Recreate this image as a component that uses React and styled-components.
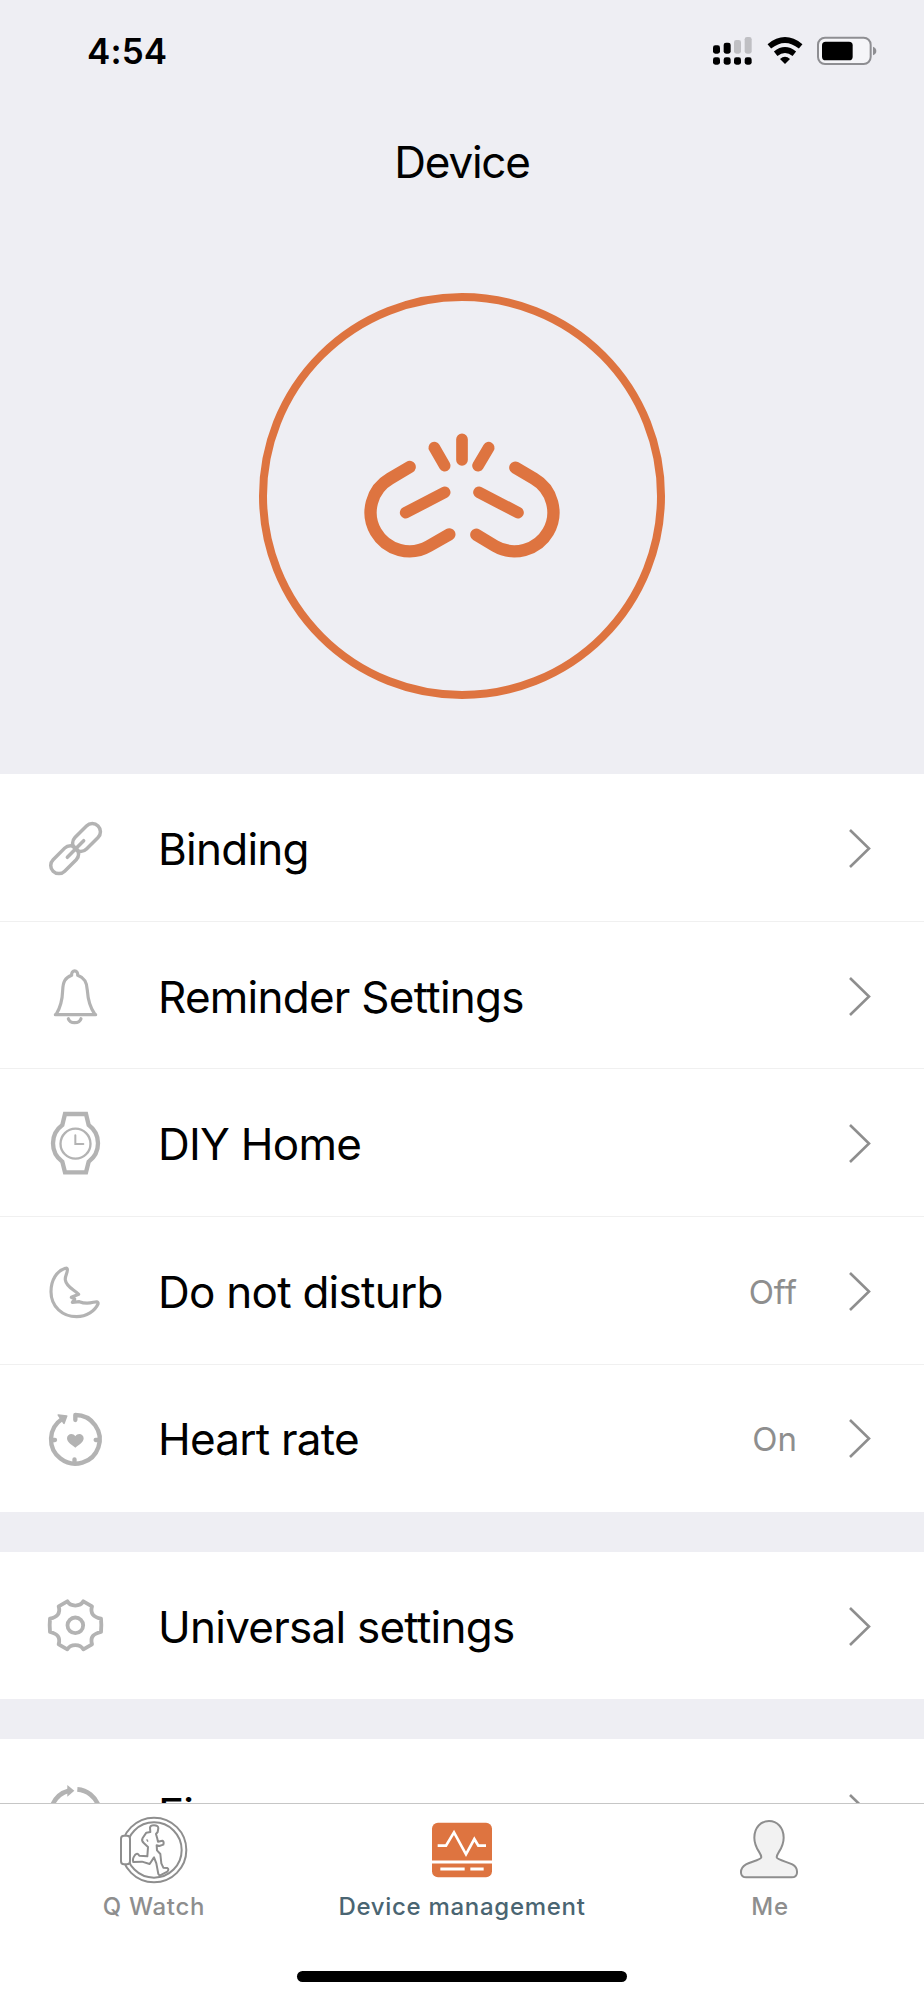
import React from 'react';
import styled, { createGlobalStyle } from 'styled-components';

const GlobalStyles = createGlobalStyle`
  :root {
    --bg: #eeeef3;
    --white: #ffffff;
    --black: #000000;
    --orange: #de7440;
    --icon: #b3b3b3;
    --muted: #8e8e8e;
    --active: #4a6572;
  }
  * {
    margin: 0;
    padding: 0;
    box-sizing: border-box;
  }
  body {
    background: var(--bg);
    font-family: Inter, 'Liberation Sans', sans-serif;
  }
`;

const Screen = styled.div`
  width: 924px;
  height: 2000px;
  display: flex;
  flex-direction: column;
  overflow: hidden;
  background: var(--bg);
`;

const StatusBar = styled.header`
  height: 100px;
  flex: none;
  display: flex;
  align-items: center;
  justify-content: space-between;
  padding: 1px 41px 0 87px;
`;

const Time = styled.span`
  font-size: 35px;
  font-weight: 600;
  letter-spacing: 0.1px;
`;

const Title = styled.h1`
  height: 124px;
  flex: none;
  line-height: 124px;
  text-align: center;
  font-size: 44px;
  font-weight: 400;
  letter-spacing: -1.2px;
`;

const Hero = styled.section`
  height: 550.3px;
  flex: none;
  display: flex;
  justify-content: center;
  align-items: flex-start;
  padding-top: 69px;
`;

const Ring = styled.div`
  width: 406px;
  height: 406px;
  display: flex;
  align-items: center;
  justify-content: center;
  border: 8px solid var(--orange);
  border-radius: 50%;
`;

const Content = styled.main`
  flex: 1;
  min-height: 0;
  display: flex;
  flex-direction: column;
  gap: 39.6px;
  overflow: hidden;
`;

const Group = styled.ul`
  flex: none;
  list-style: none;
  background: var(--white);
`;

const Row = styled.li`
  height: 147.6px;
  display: flex;
  align-items: center;
  padding: 0 53px 0 43px;

  &:not(:last-child) {
    box-shadow: inset 0 -1px 0 #f0f0f0;
  }
`;

const RowIcon = styled.svg`
  width: 64px;
  height: 64px;
  flex: none;
  fill: none;
  stroke: var(--icon);
  stroke-linecap: round;
  stroke-linejoin: round;
`;

const Label = styled.span`
  flex: 1;
  margin-left: 51px;
  font-size: 44px;
  line-height: 60px;
  letter-spacing: -0.75px;
  padding-top: 2px;
`;

const Value = styled.span`
  margin-right: 52px;
  padding-top: 2px;
  font-size: 33px;
  color: var(--muted);
`;

const Arrow = styled.svg`
  width: 22px;
  height: 40px;
  flex: none;
  fill: none;
  stroke: var(--muted);
  stroke-width: 2.6;
`;

const TabBar = styled.nav`
  height: 197px;
  flex: none;
  position: relative;
  display: grid;
  grid-template-columns: repeat(3, 1fr);
  background: var(--white);
  border-top: 1px solid #c6c6c6;
`;

const Tab = styled.div`
  display: flex;
  flex-direction: column;
  align-items: center;
  padding-top: 10px;
  color: ${({ $active }) => ($active ? 'var(--active)' : 'var(--muted)')};
`;

const TabIcon = styled.svg`
  width: 72px;
  height: 72px;
  fill: none;
  stroke: var(--muted);
  stroke-width: 6;
  stroke-linejoin: round;
`;

const TabLabel = styled.span`
  margin-top: 6px;
  font-size: 24px;
  line-height: 30px;
  font-weight: 500;
  letter-spacing: 0.7px;
`;

const HomeIndicator = styled.div`
  position: absolute;
  left: 297px;
  bottom: 18px;
  width: 330px;
  height: 11px;
  border-radius: 6px;
  background: var(--black);
`;

const icons = {
  binding: (
    <RowIcon viewBox="39 48 192 192" strokeWidth="10.5">
      <rect x="120.5" y="88" width="98" height="49" rx="24.5" transform="rotate(-45 169.5 112.5)" />
      <rect x="55" y="154.5" width="98" height="49" rx="24.5" transform="rotate(-45 104 179)" />
      <path d="M161 122 L112 172" />
    </RowIcon>
  ),
  reminder: (
    <RowIcon viewBox="39 491 192 192" strokeWidth="9.5">
      <path d="M76 643 H197 M79 641 C92 620 97 600 98 570 C99 545 105 532 125 525 C123 507 145 507 143 525 C163 532 171 545 172 570 C174 600 181 622 194 641" />
      <path d="M115 655 C120 671 148 671 153 655" />
    </RowIcon>
  ),
  watch: (
    <RowIcon viewBox="39 64 192 192" strokeWidth="13">
      <path
        strokeLinejoin="miter"
        d="M105 73 H168 L176 106 A68 68 0 0 1 176 216 L168 248 H105 L97 216 A68 68 0 0 1 97 106 Z"
      />
      <circle cx="136.5" cy="162" r="45" strokeWidth="7" />
      <path strokeWidth="6" strokeLinejoin="miter" d="M136 137 V163 H160" />
    </RowIcon>
  ),
  moon: (
    <RowIcon viewBox="39 507 192 192" strokeWidth="9.5">
      <path d="M106 535 C80 543 63 570 63 605 C63 650 98 680 140 680 C170 680 195 662 204 642 C206 634 198 635 190 637 C175 641 160 640 148 635 L127 637 L134 627 L124 622 L146 613 C135 600 109 592 106 570 C104 560 112 550 112 541 C113 535 110 533 106 535 Z" />
    </RowIcon>
  ),
  heart: (
    <RowIcon viewBox="39 50 192 192" strokeWidth="13">
      <path d="M136 92 V77 A73 73 0 1 1 96 89" />
      <path d="M68 152 H75 M197 152 H204 M133.500 210 V216" />
      <path strokeWidth="5" fill="#b3b3b3" d="M85 77 L110 80 L102 102 Z" />
      <path
        stroke="none"
        fill="#b3b3b3"
        d="M136 175 C128 168 111 160 111 147 C111 133 129 129 136 141 C143 129 161 133 161 147 C161 160 144 168 136 175 Z"
      />
    </RowIcon>
  ),
  gear: (
    <RowIcon viewBox="39 613 192 192" strokeWidth="11.5">
      <path d="M112 635 C122 652 150 652 160 635 L186 650 C180 672 190 682 213 687 Q215 707 213 727 C190 732 180 742 186 764 L160 779 C150 762 122 762 112 779 L86 764 C92 742 82 732 60 727 Q58 707 60 687 C82 682 92 672 86 650 Z" />
      <circle cx="136" cy="707" r="23.5" />
    </RowIcon>
  ),
  find: (
    <RowIcon viewBox="39 152 192 192" strokeWidth="14">
      <path strokeLinecap="butt" d="M66 228 A73 73 0 0 1 116 181 M142 177 A73 73 0 0 1 206 228" />
      <path stroke="none" fill="#b3b3b3" d="M112 164 L133 181 L112 199 Z" />
    </RowIcon>
  ),
};

const groups = [
  [
    { icon: 'binding', label: 'Binding' },
    { icon: 'reminder', label: 'Reminder Settings' },
    { icon: 'watch', label: 'DIY Home' },
    { icon: 'moon', label: 'Do not disturb', value: 'Off' },
    { icon: 'heart', label: 'Heart rate', value: 'On' },
  ],
  [{ icon: 'gear', label: 'Universal settings' }],
  [{ icon: 'find', label: 'Fi' }],
];

function StatusIcons() {
  return (
    <svg width="171" height="30" viewBox="66 46 513 90">
      <rect x="69" y="74" width="21" height="25" rx="7" />
      <rect x="101" y="66" width="21" height="33" rx="7" />
      <g fill="#bfbfc3">
        <rect x="132" y="58" width="21" height="41" rx="7" />
        <rect x="164" y="49" width="21" height="50" rx="7" />
      </g>
      <rect x="69" y="110" width="21" height="22" rx="7" />
      <rect x="101" y="110" width="21" height="22" rx="7" />
      <rect x="132" y="110" width="21" height="22" rx="7" />
      <rect x="164" y="110" width="21" height="22" rx="7" />
      <path
        fill="none"
        stroke="#000"
        strokeWidth="17"
        d="M238 77 Q285 39 332 77 M257 99 Q285 77 313 99"
      />
      <path d="M285 130 L270 115 Q285 102 300 115 Z" />
      <rect x="384" y="51" width="158" height="79" rx="21" fill="#f5f5f8" stroke="#8e8e92" strokeWidth="6" />
      <rect x="396" y="63" width="92" height="56" rx="11" />
      <path fill="#8e8e92" d="M549 78 Q559 82 559 91 Q559 100 549 104 Z" />
    </svg>
  );
}

function BrokenLink() {
  return (
    <svg
      width="240"
      height="170"
      viewBox="6 3 720 510"
      fill="none"
      stroke="#de7440"
      strokeWidth="37"
      strokeLinecap="round"
    >
      <path d="M209 171 L150 206 A116.500 116.500 0 0 0 267 408 L328 373" />
      <path d="M526 173 L582 206 A116.500 116.500 0 0 1 465 408 L409 374" />
      <path strokeWidth="35" d="M197 308 L314 247 M417 247 L534 308" />
      <path strokeWidth="35" d="M366 88 V150 M283 113 L314 167 M446 113 L414 167" />
    </svg>
  );
}

function App() {
  return (
    <>
      <GlobalStyles />
      <Screen>
        <StatusBar>
          <Time>4:54</Time>
          <StatusIcons />
        </StatusBar>
        <Title>Device</Title>
        <Hero>
          <Ring>
            <BrokenLink />
          </Ring>
        </Hero>
        <Content>
          {groups.map((rows) => (
            <Group key={rows[0].icon}>
              {rows.map(({ icon, label, value }) => (
                <Row key={icon}>
                  {icons[icon]}
                  <Label>{label}</Label>
                  {value && <Value>{value}</Value>}
                  <Arrow viewBox="0 0 22 40">
                    <path d="M1 2 L20 20.500 L1 39" />
                  </Arrow>
                </Row>
              ))}
            </Group>
          ))}
        </Content>
        <TabBar>
          <Tab>
            <TabIcon viewBox="264 252 216 216">
              <circle cx="372" cy="360" r="97" />
              <circle cx="372" cy="360" r="83" />
              <rect x="273" y="317" width="27" height="86" rx="9" fill="#fff" />
              <path d="M361 306 L360 293 Q361 286 372 286 Q384 286 385 294 L383 306 L378 312 L382 326 L384 335 L397 332 Q403 335 400 344 L388 348 L380 346 L381 361 L391 372 L394 400 L400 413 L412 414 Q418 418 412 425 L389 437 L385 432 L379 400 L372 382 L359 402 L336 395 L310 396 Q306 387 315 375 Q322 367 328 377 L352 379 L354 351 L342 340 Q333 332 338 324 L349 308 Z" />
              <path strokeWidth="4" d="M350 328 L354 335" />
            </TabIcon>
            <TabLabel>Q Watch</TabLabel>
          </Tab>
          <Tab $active>
            <TabIcon viewBox="318 72 216 216">
              <rect x="336" y="98" width="180" height="164" rx="18" fill="#de7440" stroke="none" />
              <g stroke="#fff" strokeWidth="9">
                <path d="M336 216 H516" />
                <path strokeLinejoin="miter" strokeWidth="8" d="M353 167 H378 L402 127 L438 193 L463 147 L475 167 H498" />
                <path d="M361 237 H434 M451 237 H491" />
              </g>
            </TabIcon>
            <TabLabel>Device management</TabLabel>
          </Tab>
          <Tab>
            <TabIcon viewBox="102 132 216 216">
              <path
                fill="#f2f2f2"
                d="M184 262 C184 248 163 236 163 203 C163 172 183 153 207 153 C231 153 251 172 251 203 C251 236 230 248 230 262 C230 269 262 276 277 283 C290 290 292 299 291 309 C290 319 284 322 275 322 H139 C130 322 124 318 123 309 C122 297 126 290 138 283 C152 276 184 269 184 262 Z"
              />
            </TabIcon>
            <TabLabel>Me</TabLabel>
          </Tab>
          <HomeIndicator />
        </TabBar>
      </Screen>
    </>
  );
}

export default App;
